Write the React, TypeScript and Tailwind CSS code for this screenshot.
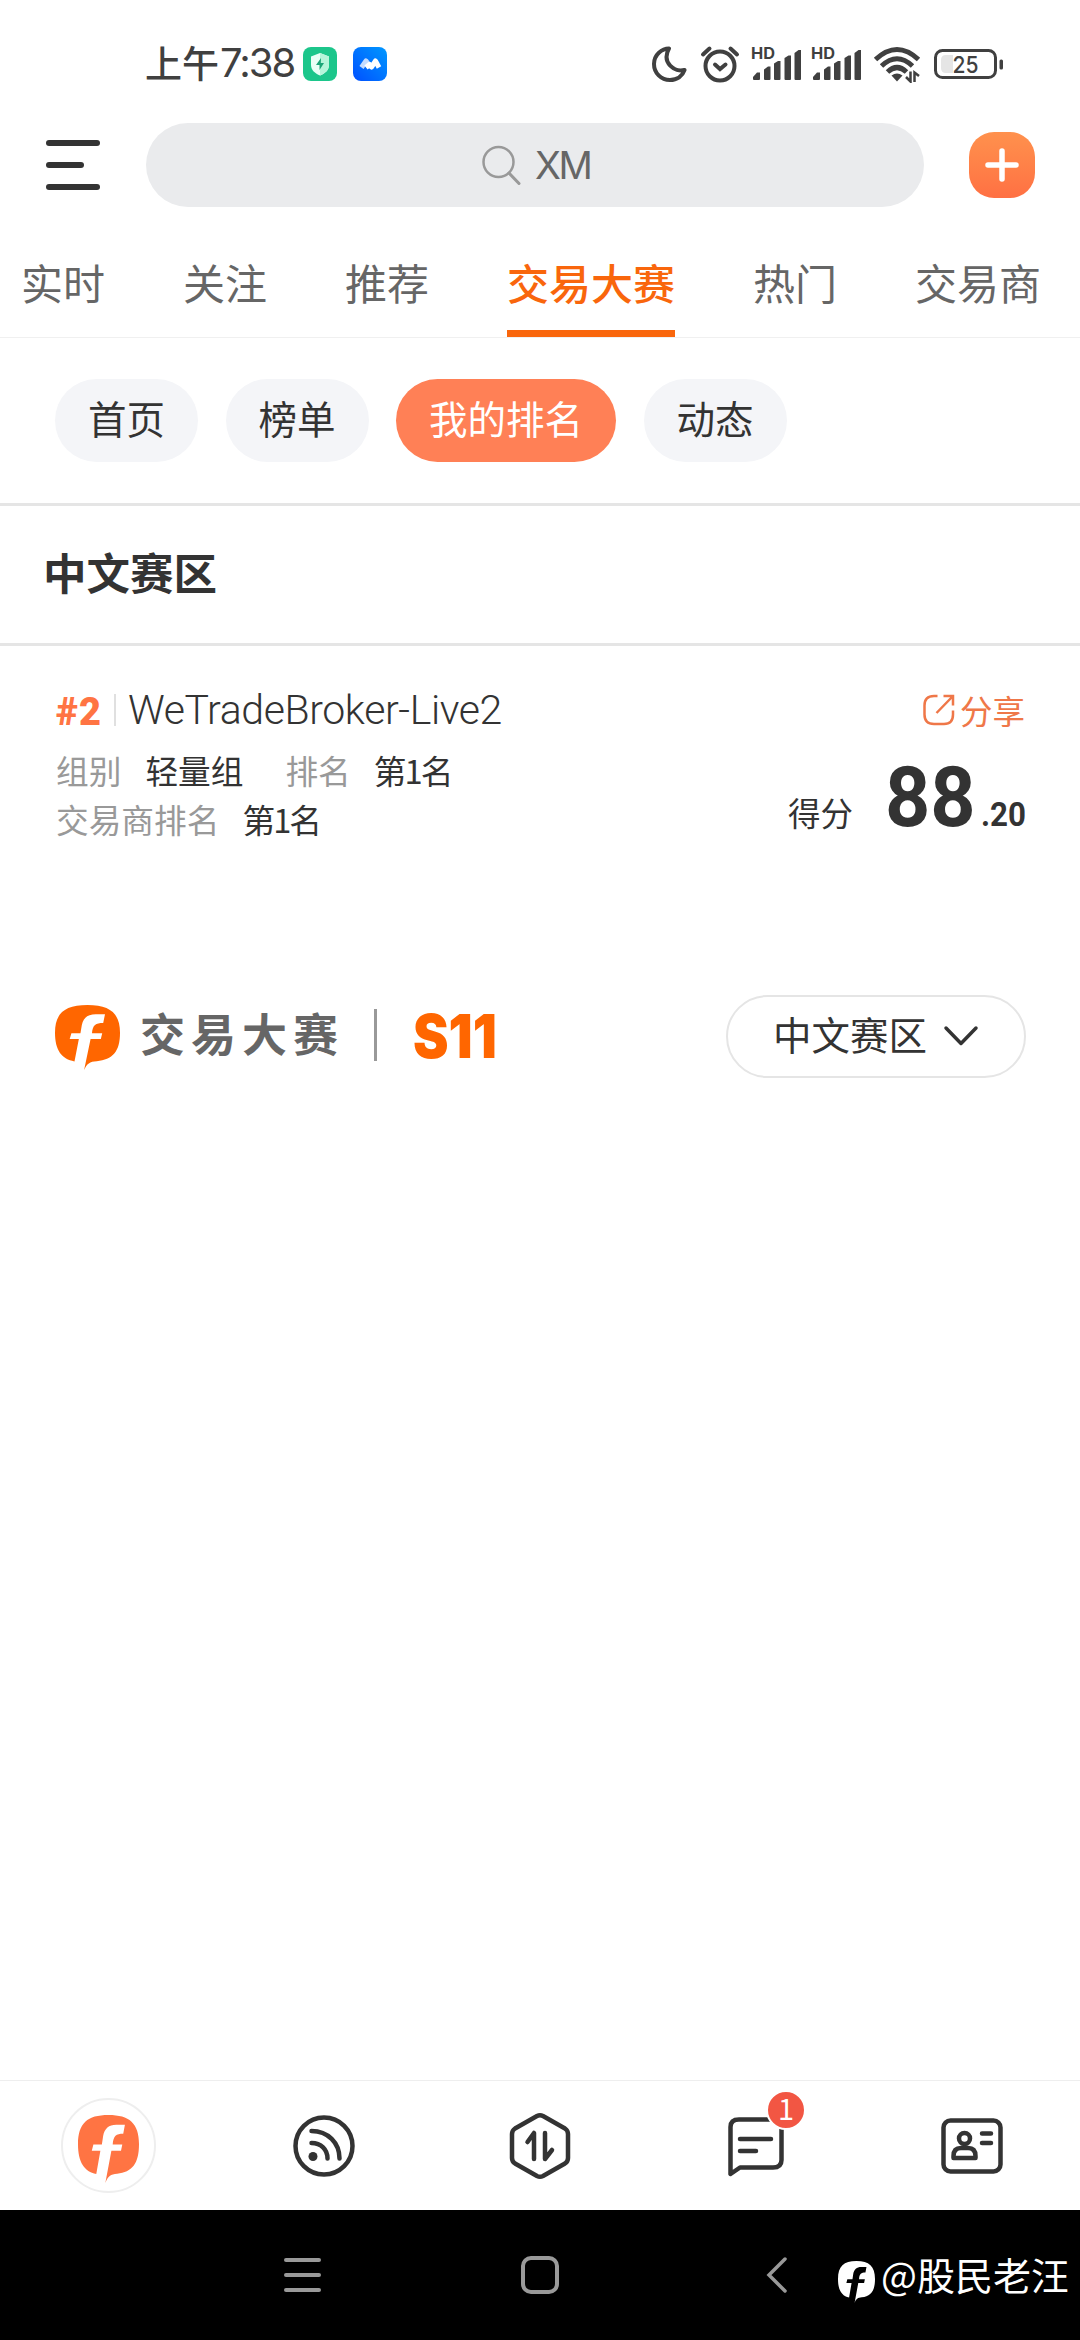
import React from 'react';

const tabs = ['实时', '关注', '推荐', '交易大赛', '热门', '交易商'];
const chips = ['首页', '榜单', '我的排名', '动态'];

function BrandMark({ className }: { className: string }) {
  return (
    <svg viewBox="0 0 65.4 65.4" preserveAspectRatio="none" fill="currentColor" className={className}>
      <path d="M29.3 65.4C32 59 35 56.8 42 56.5C58 55 65.4 47 65.4 28C65.4 8 55 0 32.7 0C10 0 0 8 0 28C0 46 7 54.5 19.6 56.8L24 34.3H14.8L16.5 28.3H25.6L27 20C28.5 13 33 9.3 41 9.3H50.3L48.5 18C41 18 37.8 20 37.2 28.3H47.5L46.1 34.3H35.8Z" />
    </svg>
  );
}

function Signal() {
  return (
    <svg viewBox="0 -8 52 44" className="-mt-2 h-11 w-[52px]" fill="#404040">
      <text x="0" y="14" fontSize="16" fontWeight="700" fontFamily="Inter" textLength="24" lengthAdjust="spacingAndGlyphs">HD</text>
      <path d="M2 34V32L6 27.5H9V34Q9 35 8 35H3Q2 35 2 34Z" />
      <path d="M13 24.5L17 21.5H19.500V34Q19.500 35 18.500 35H14Q13 35 13 34Z" />
      <path d="M23 18.500L27 16H29.500V34Q29.500 35 28.500 35H24Q23 35 23 34Z" />
      <path d="M33.500 13L37.500 10.500H40V34Q40 35 39 35H34.500Q33.500 35 33.500 34Z" />
      <path d="M43.500 8L47.500 5H50V34Q50 35 49 35H44.500Q43.500 35 43.500 34Z" />
    </svg>
  );
}

function StatusBar() {
  return (
    <div className="flex h-[123px] items-start pl-[145px] pt-[41px]">
      <div className="flex h-11 w-[158px] items-center whitespace-nowrap text-[37px] font-medium text-[#404040]">
        上午<span className="ml-px font-['Inter'] text-[40px] font-normal tracking-[-2px]">7:38</span>
      </div>
      <svg viewBox="0 0 34 34" className="mt-1.5 size-[34px]">
        <rect width="34" height="34" rx="8" fill="#1cc68b" />
        <path d="M17 6L26 9.500V18C26 23 22 26.500 17 28.500C12 26.500 8 23 8 18V9.500Z" fill="#e9fff6" />
        <path d="M17 6L26 9.500V18C26 23 22 26.500 17 28.500Z" fill="#b5f5da" />
        <path d="M18 11L13 18H16.500V23L21 16H17.800Z" fill="#1aa577" />
      </svg>
      <svg viewBox="0 0 34 34" className="ml-4 mt-1.5 size-[34px]">
        <defs>
          <linearGradient id="blue" x1="0" y1="1" x2="1" y2="0">
            <stop offset="0" stopColor="#0050ff" />
            <stop offset="1" stopColor="#0098ff" />
          </linearGradient>
        </defs>
        <rect width="34" height="34" rx="8" fill="url(#blue)" />
        <path d="M8.500 20.500L13 14L17 20" fill="none" stroke="#c4dcff" strokeWidth="5" strokeLinejoin="round" />
        <path d="M13 20.500L16.500 17.500L18.500 20L22.500 14L26 20.500" fill="none" stroke="#fff" strokeWidth="5" strokeLinejoin="round" />
      </svg>
      <svg viewBox="0 0 36 38" className="ml-[264px] mt-1 h-[38px] w-9" fill="none" stroke="#404040" strokeWidth="4" strokeLinejoin="round">
        <path d="M18 3.500C11 3.500 3 9.500 3 19C3 28 10 35 19 35C26 35 31.500 31 33.500 25C24 27.500 10 18 18 3.500Z" />
      </svg>
      <svg viewBox="0 0 40 38" className="ml-[13px] mt-1 h-[38px] w-10" fill="none" stroke="#404040" strokeWidth="4" strokeLinecap="round">
        <circle cx="20" cy="21" r="14.500" />
        <path d="M15 19.500L20 24L25.500 19.500" />
        <path d="M3 9.500L9.500 3.500M37 9.500L30.500 3.500" />
      </svg>
      <div className="ml-[11px] mt-1 flex gap-2">
        <Signal />
        <Signal />
      </div>
      <svg viewBox="0 0 48 38" className="ml-[10px] mt-1 h-[38px] w-12" fill="none" stroke="#404040" strokeWidth="5">
        <path d="M2.500 14.500Q24 -5.500 45.500 14.500" />
        <path d="M8.500 21Q24 6.500 39.500 21" />
        <path d="M14.500 27Q24 18 33.500 27" />
        <path d="M18.500 30.500Q24 26.500 29.500 30.500L24 36.500Z" fill="#404040" stroke="none" />
        <path d="M37.500 26.500V36.500L33 32M41.500 37V27.500L46 31" strokeWidth="2.500" />
      </svg>
      <svg viewBox="0 0 70 34" className="ml-[13px] mt-1.5 h-[34px] w-[70px]">
        <rect x="1.500" y="3.500" width="60" height="27" rx="7" fill="none" stroke="#404040" strokeWidth="3" />
        <path d="M12 8H19V26H12Q7 26 7 21V13Q7 8 12 8Z" fill="#e5e5e5" />
        <rect x="65.500" y="12.500" width="3.500" height="10" rx="1.500" fill="#404040" />
        <text x="18.500" y="25.500" fontSize="23.500" fontFamily="Inter" fontWeight="500" fill="#404040" textLength="26" lengthAdjust="spacingAndGlyphs">25</text>
      </svg>
    </div>
  );
}

function SearchRow() {
  return (
    <div className="flex h-[84px] items-center pl-[46px]">
      <div className="flex w-[54px] flex-col gap-4">
        <span className="h-1.5 rounded-full bg-[#333]" />
        <span className="h-1.5 w-[38px] rounded-full bg-[#333]" />
        <span className="h-1.5 rounded-full bg-[#333]" />
      </div>
      <div className="ml-[46px] flex h-[84px] w-[778px] items-center rounded-full bg-[#eaebed] pl-[335px]">
        <svg viewBox="0 0 42 42" className="size-[42px]" fill="none" stroke="#999" strokeWidth="2.500">
          <circle cx="17.500" cy="18" r="15" />
          <path d="M28 29L38 39.500" strokeWidth="3" strokeLinecap="round" />
        </svg>
        <span className="ml-3 font-['Inter'] text-[38px] tracking-[-2.500px] text-[#666]">XM</span>
      </div>
      <div className="ml-[45px] flex size-[66px] items-center justify-center rounded-[25px] bg-linear-to-b from-[#ff914d] to-[#ff7043]">
        <svg viewBox="0 0 34 34" className="size-[34px]" stroke="#fff" strokeWidth="5.500" strokeLinecap="round">
          <path d="M17 3V31M3 17H31" />
        </svg>
      </div>
    </div>
  );
}

function Place({ n }: { n: number }) {
  return (
    <span>
      第<span className="-mx-0.5">{n}</span>名
    </span>
  );
}

function RankCard() {
  return (
    <div className="flex h-[346px] justify-between pl-14 pr-[55px]">
      <div className="pt-9 text-[32.700px] text-[#333]">
        <div className="flex h-14 items-center">
          <span className="w-[58px] pt-1 font-['Roboto'] text-[38px] font-black tracking-[1px] text-[#ff7443]">#2</span>
          <span className="h-8 w-0.5 bg-[#e0e0e0]" />
          <span className="ml-3 whitespace-nowrap pt-0.5 font-['Roboto'] text-[41px] font-[350] tracking-[-0.400px]">WeTradeBroker-Live2</span>
        </div>
        <div className="mt-[7px] flex h-[49px] items-center">
          <span className="text-[#999]">组别</span>
          <span className="ml-6">轻量组</span>
          <span className="ml-[42px] mr-[23px] text-[#999]">排名</span>
          <Place n={1} />
        </div>
        <div className="flex h-[49px] items-center">
          <span className="mr-[23px] text-[#999]">交易商排名</span>
          <Place n={1} />
        </div>
      </div>
      <div className="flex flex-col items-end pt-9">
        <div className="flex h-14 items-center text-[32.500px] text-[#ef7748]">
          <svg viewBox="0 0 34 34" className="mr-1 size-[34px]" fill="none" stroke="currentColor" strokeWidth="2.500">
            <path d="M15.500 3H12Q2.500 3 2.500 12.500V21.500Q2.500 31 12 31H22Q31 31 31 21.500V17.500" />
            <path d="M14.500 20L30.500 3.500M21.500 3H31V12.500" />
          </svg>
          <span className="pt-px">分享</span>
        </div>
        <div className="mt-[11px] flex h-[98px] items-baseline text-[#333]">
          <span className="text-[32.500px]">得分</span>
          <span className="ml-8 w-[96px] origin-left scale-x-[0.94] font-['Roboto'] text-[84px]/[98px] font-bold">88</span>
          <span className="w-[44px] origin-left scale-x-[0.92] font-['Roboto'] text-[34px] font-bold">.20</span>
        </div>
      </div>
    </div>
  );
}

function BottomTabs() {
  return (
    <div className="grid h-[130px] grid-cols-5 place-items-center border-t border-[#eee]">
      <div className="flex size-[95px] items-center justify-center rounded-full border-2 border-[#eee]">
        <BrandMark className="mt-1.5 h-[68px] w-[61px] text-[#ff7443]" />
      </div>
      <svg viewBox="0 0 62 62" className="size-[62px]" fill="none" stroke="#333" strokeWidth="4.500" strokeLinecap="round">
        <circle cx="31" cy="31" r="28.500" />
        <path d="M18.500 16C35 16 46.500 28 46.500 43.500M18.500 28C28 28 34.500 34.500 34.500 43.500" />
        <circle cx="20" cy="41.500" r="4.500" fill="#333" stroke="none" />
      </svg>
      <svg viewBox="0 0 62 68" className="h-[68px] w-[62px]" fill="none" stroke="#333" strokeWidth="4.500" strokeLinecap="round" strokeLinejoin="round">
        <path d="M28 4Q31 2.500 34 4L56 16.500Q59 18.500 59 22V46Q59 49.500 56 51.500L34 64Q31 65.500 28 64L6 51.500Q3 49.500 3 46V22Q3 18.500 6 16.500Z" />
        <path d="M18.500 30L25 21V47M36 21V47L43 38" />
      </svg>
      <div className="relative">
        <svg viewBox="0 0 58 62" className="h-[62px] w-[58px]" fill="none" stroke="#333" strokeWidth="4.500" strokeLinecap="round" strokeLinejoin="round">
          <path d="M12 4.500H46Q54.500 4.500 54.500 13V45Q54.500 52.500 46 52.500H13L3.500 59V12Q3.500 4.500 12 4.500Z" />
          <path d="M13 24H44M13 36H29" />
        </svg>
        <span className="absolute -top-[25px] left-[39px] box-content flex size-9 items-center justify-center rounded-full border-2 border-white bg-[#f25643] text-[29px] text-white">
          <span className="-mt-1">1</span>
        </span>
      </div>
      <svg viewBox="0 0 62 56" className="h-14 w-[62px]" fill="none" stroke="#333" strokeWidth="4.500" strokeLinecap="round">
        <rect x="2.500" y="2.500" width="57" height="51" rx="7" />
        <circle cx="23.500" cy="20.500" r="5.500" />
        <path d="M12.500 40V38Q12.500 30 20 30H27Q34.500 30 34.500 38V40Z" strokeLinejoin="round" />
        <path d="M41 15.500H50M41 25H50" />
      </svg>
    </div>
  );
}

function SystemNav() {
  return (
    <div className="flex h-[130px] items-center bg-black pl-[284px] text-[#999]">
      <div className="flex w-[37px] flex-col gap-[11px]">
        <span className="h-1 rounded-full bg-current" />
        <span className="h-1 rounded-full bg-current" />
        <span className="h-1 rounded-full bg-current" />
      </div>
      <div className="ml-[200px] size-[38px] rounded-[10px] border-4 border-current" />
      <svg viewBox="0 0 22 38" className="ml-[207px] h-[38px] w-[22px]" fill="none" stroke="currentColor" strokeWidth="3.500" strokeLinecap="round">
        <path d="M19 3L3 19L19 35" />
      </svg>
      <BrandMark className="ml-[50px] mt-3.5 h-[42px] w-[37px] text-white" />
      <span className="ml-1.5 whitespace-nowrap pb-1 text-[38px] text-white">@股民老汪</span>
    </div>
  );
}

function App() {
  return (
    <div className="flex h-[2340px] w-[1080px] flex-col overflow-hidden bg-white font-['Noto_Sans_CJK_SC',sans-serif]">
      <StatusBar />
      <SearchRow />

      {/* Channel tabs */}
      <div className="flex h-[131px] gap-[78px] border-b border-[#f0f0f0] pl-[21px] text-[42px] text-[#666]">
        {tabs.map(tab => (
          <div
            key={tab}
            className={
              tab === '交易大赛'
                ? 'flex h-[130px] shrink-0 items-center border-b-[7px] border-[#f9660c] pt-[25px] font-medium text-[#f9660c]'
                : 'flex h-[130px] shrink-0 items-center border-b-[7px] border-transparent pt-[25px]'
            }
          >
            {tab}
          </div>
        ))}
      </div>

      {/* Contest sub pages */}
      <div className="flex h-[168px] gap-[27.500px] border-b-[3px] border-[#e5e5e5] pl-[55px] pt-[41px] text-[38.500px] text-[#333]">
        {chips.map(chip => (
          <div
            key={chip}
            className={
              chip === '我的排名'
                ? 'flex h-[83px] items-center rounded-full bg-[#ff8056] px-[33px] pb-[5px] text-white'
                : 'flex h-[83px] items-center rounded-full bg-[#f4f5f8] px-[33px] pb-[5px]'
            }
          >
            {chip}
          </div>
        ))}
      </div>

      <h2 className="flex h-[140px] items-center border-b-[3px] border-[#e5e5e5] pb-1.5 pl-[43px] text-[43.500px] font-bold text-[#333]">中文赛区</h2>

      <RankCard />

      {/* Season banner */}
      <div className="flex h-[86px] items-center pl-[55px]">
        <BrandMark className="mt-1 size-[65px] text-[#ff6600]" />
        <span className="ml-5 w-[234px] whitespace-nowrap pb-1 text-[45px] font-bold tracking-[6px] text-[#666]">交易大赛</span>
        <span className="h-[52px] w-[3px] bg-[#999]" />
        <span className="ml-9 w-[84px] origin-left scale-x-[0.89] pt-0.5 font-['Inter'] text-[60px] font-black text-[#ff6600]">S11</span>
        <div className="ml-[229px] mt-0.5 flex h-[83px] w-[300px] items-center rounded-full border-2 border-[#e5e5e5] pl-[45px] text-[38.500px] text-[#333]">
          <span className="whitespace-nowrap pb-1">中文赛区</span>
          <svg viewBox="0 0 36 22" className="ml-4 h-[22px] w-9" fill="none" stroke="#333" strokeWidth="3.500" strokeLinecap="round" strokeLinejoin="round">
            <path d="M3 3L18 18.500L33 3" />
          </svg>
        </div>
      </div>

      <div className="flex-1" />
      <BottomTabs />
      <SystemNav />
    </div>
  );
}

export default App;
